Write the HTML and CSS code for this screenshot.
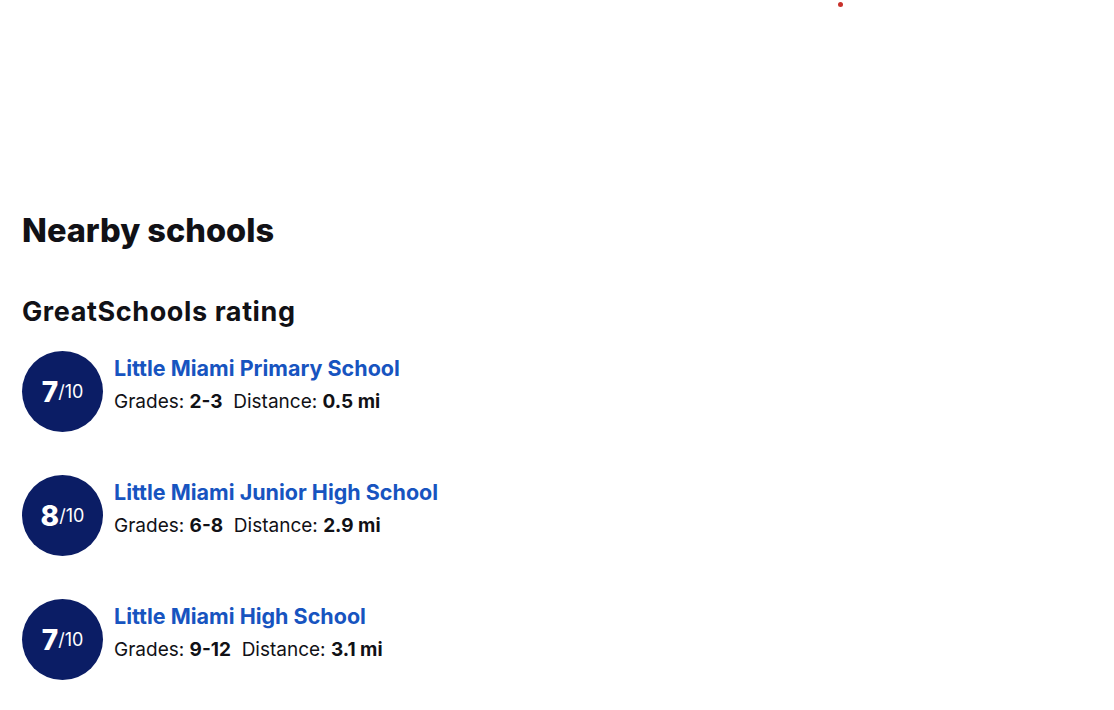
FILE: index.html
```html
<!DOCTYPE html>
<html>
<head>
<meta charset="utf-8">
<link rel="stylesheet" href="styles.css">
</head>
<body>
<div class="top"><span class="dot"></span></div>
<section class="schools">
  <h2 class="title">Nearby schools</h2>
  <h3 class="subtitle">GreatSchools rating</h3>
  <ul class="list">
    <li class="school">
      <div class="rating"><span class="num">7</span><span class="den">/10</span></div>
      <div class="info">
        <a class="name" href="#">Little Miami Primary School</a>
        <div class="meta">Grades: <b>2-3</b>&nbsp; Distance: <b>0.5 mi</b></div>
      </div>
    </li>
    <li class="school">
      <div class="rating"><span class="num">8</span><span class="den">/10</span></div>
      <div class="info">
        <a class="name" href="#">Little Miami Junior High School</a>
        <div class="meta">Grades: <b>6-8</b>&nbsp; Distance: <b>2.9 mi</b></div>
      </div>
    </li>
    <li class="school">
      <div class="rating"><span class="num">7</span><span class="den">/10</span></div>
      <div class="info">
        <a class="name" href="#">Little Miami High School</a>
        <div class="meta">Grades: <b>9-12</b>&nbsp; Distance: <b>3.1 mi</b></div>
      </div>
    </li>
  </ul>
</section>
</body>
</html>
```
FILE: styles.css
```css
html, body { margin: 0; padding: 0; background: #fff; }
body { font-family: Inter, "Liberation Sans", sans-serif; color: #111116; width: 1114px; height: 710px; overflow: hidden; }
.top { height: 207px; position: relative; }
.dot { position: absolute; left: 838px; top: 2px; width: 5px; height: 5px; border-radius: 50%; background: #c8312b; }
.schools { padding: 0 22px; }
.title { margin: 0; font-size: 32.5px; font-weight: 800; line-height: 48px; }
.subtitle { margin: 39px 0 0; font-size: 27px; font-weight: 700; line-height: 36px; letter-spacing: 0.6px; }
.list { list-style: none; margin: 21px 0 0; padding: 0; display: flex; flex-direction: column; gap: 43px; }
.school { display: flex; align-items: flex-start; gap: 11px; }
.rating { width: 81px; height: 81px; border-radius: 50%; background: #0b1d65; color: #fff; display: flex; align-items: center; justify-content: center; }
.num { font-size: 28px; font-weight: 800; }
.den { font-size: 18px; font-weight: 400; }
.info { display: flex; flex-direction: column; padding-top: 3px; }
.name { color: #1754c0; text-decoration: none; font-size: 21.5px; font-weight: 700; line-height: 28px; }
.meta { font-size: 19px; line-height: 28px; margin-top: 6px; }
.meta b { font-weight: 700; }
```
